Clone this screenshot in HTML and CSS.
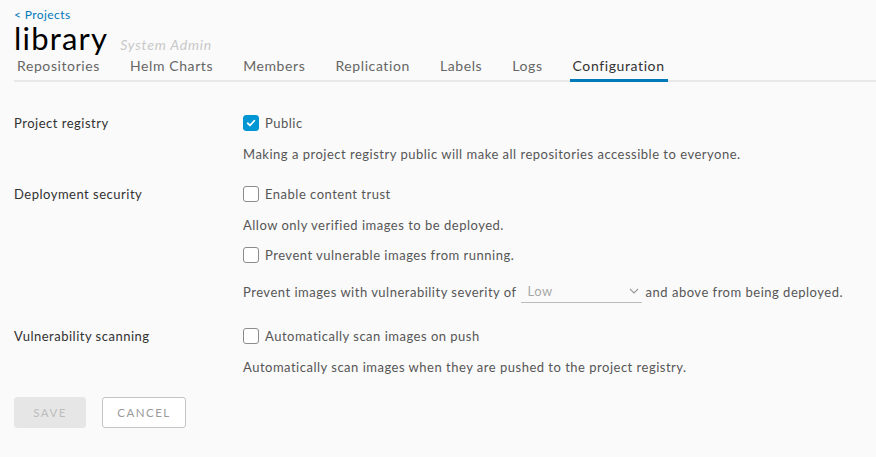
FILE: index.html
```html
<!DOCTYPE html>
<html>
<head>
<meta charset="utf-8">
<link rel="stylesheet" href="styles.css">
</head>
<body>
<div class="page">
  <a class="back" href="#">&lt; Projects</a>
  <div class="title-row">
    <h1 class="title">library</h1>
    <span class="role">System Admin</span>
  </div>
  <nav class="tabs">
    <span class="tab">Repositories</span>
    <span class="tab">Helm Charts</span>
    <span class="tab">Members</span>
    <span class="tab">Replication</span>
    <span class="tab">Labels</span>
    <span class="tab">Logs</span>
    <span class="tab active">Configuration</span>
  </nav>

  <div class="form">
    <div class="row">
      <div class="label">Project registry</div>
      <div class="controls">
        <label class="check"><span class="box checked"><svg viewBox="0 0 16 16" width="16" height="16"><path d="M4.2 8.3 L6.9 10.8 L11.8 5.4" fill="none" stroke="#fff" stroke-width="2" stroke-linecap="round" stroke-linejoin="round"/></svg></span>Public</label>
        <p class="help">Making a project registry public will make all repositories accessible to everyone.</p>
      </div>
    </div>
    <div class="row">
      <div class="label">Deployment security</div>
      <div class="controls">
        <label class="check"><span class="box"></span>Enable content trust</label>
        <p class="help">Allow only verified images to be deployed.</p>
        <label class="check"><span class="box"></span>Prevent vulnerable images from running.</label>
        <p class="help sev"><span>Prevent images with vulnerability severity of</span>
          <span class="select">Low<svg viewBox="0 0 10 6" width="10" height="6"><path d="M1 1 L5 5 L9 1" fill="none" stroke="#9a9a9a" stroke-width="1.1"/></svg></span>
          <span>and above from being deployed.</span></p>
      </div>
    </div>
    <div class="row">
      <div class="label">Vulnerability scanning</div>
      <div class="controls">
        <label class="check"><span class="box"></span>Automatically scan images on push</label>
        <p class="help last">Automatically scan images when they are pushed to the project registry.</p>
      </div>
    </div>
  </div>

  <div class="buttons">
    <button class="btn save" disabled>SAVE</button>
    <button class="btn cancel">CANCEL</button>
  </div>
</div>
</body>
</html>
```

FILE: styles.css
```css
html, body {
  margin: 0;
  padding: 0;
  background: #fafafa;
}
body {
  font-family: "Lato", "Open Sans", sans-serif;
  color: #565656;
  font-size: 13px;
  letter-spacing: 0.5px;
}
.page {
  padding: 8px 0 0 14px;
}
.back {
  display: block;
  color: #0079b8;
  font-size: 12px;
  line-height: 14px;
  letter-spacing: 0.4px;
  text-decoration: none;
}
.title-row {
  display: flex;
  align-items: baseline;
  gap: 12px;
  height: 32px;
}
.title {
  margin: 0;
  font-weight: 400;
  font-size: 31px;
  line-height: 32px;
  letter-spacing: 1.2px;
  color: #000;
}
.role {
  font-style: italic;
  color: #c8c8c8;
  font-size: 14px;
  letter-spacing: 0.8px;
}
.tabs {
  display: flex;
  gap: 30px;
  border-bottom: 2px solid #e8e8e8;
  height: 26px;
  margin-top: 0;
  padding-left: 3px;
}
.tab {
  font-size: 14px;
  letter-spacing: 0.6px;
  color: #666;
  line-height: 20px;
  padding-top: 2px;
}
.tab.active {
  color: #333;
  border-bottom: 3px solid #0079b8;
  margin-bottom: -2px;
  padding: 2px 3px 0;
  margin-left: -3px;
  margin-right: -3px;
}
.form {
  padding-top: 33px;
}
.row {
  display: grid;
  grid-template-columns: 229px 1fr;
  margin-bottom: 24px;
}
.label {
  color: #313131;
  font-size: 13px;
  line-height: 16px;
}
.controls {
  display: flex;
  flex-direction: column;
}
.check {
  display: flex;
  align-items: center;
  gap: 6px;
  color: #565656;
  line-height: 16px;
  height: 16px;
}
.box {
  width: 14px;
  height: 14px;
  border: 1px solid #8c8c8c;
  border-radius: 3px;
  background: #fff;
  display: inline-flex;
  align-items: center;
  justify-content: center;
}
.box.checked {
  background: #0095d3;
  border-color: #0095d3;
}
.box svg {
  width: 14px;
  height: 14px;
}
.help {
  margin: 15px 0 0;
  line-height: 16px;
}
.help + .check {
  margin-top: 14px;
}
.help.sev {
  display: flex;
  align-items: center;
  gap: 4px;
  margin-top: 18px;
  margin-bottom: 2px;
}
.select {
  display: inline-flex;
  justify-content: space-between;
  align-items: center;
  width: 111px;
  padding: 0 3px 2px 7px;
  border-bottom: 1px solid #bcbcbc;
  color: #a8a8a8;
  line-height: 18px;
  position: relative;
  top: 1px;
}
.row:last-child {
  margin-bottom: 0;
}
.buttons {
  display: flex;
  gap: 16px;
  margin-top: 22px;
}
.btn {
  height: 31px;
  font-family: inherit;
  font-size: 11.5px;
  letter-spacing: 1.5px;
  border-radius: 3px;
  padding: 0 12px;
}
.save {
  width: 72px;
  background: #e6e6e6;
  border: 1px solid #e6e6e6;
  color: #bdbdbd;
}
.cancel {
  width: 84px;
  background: #fff;
  border: 1px solid #c4c4c4;
  color: #9a9a9a;
}
```
